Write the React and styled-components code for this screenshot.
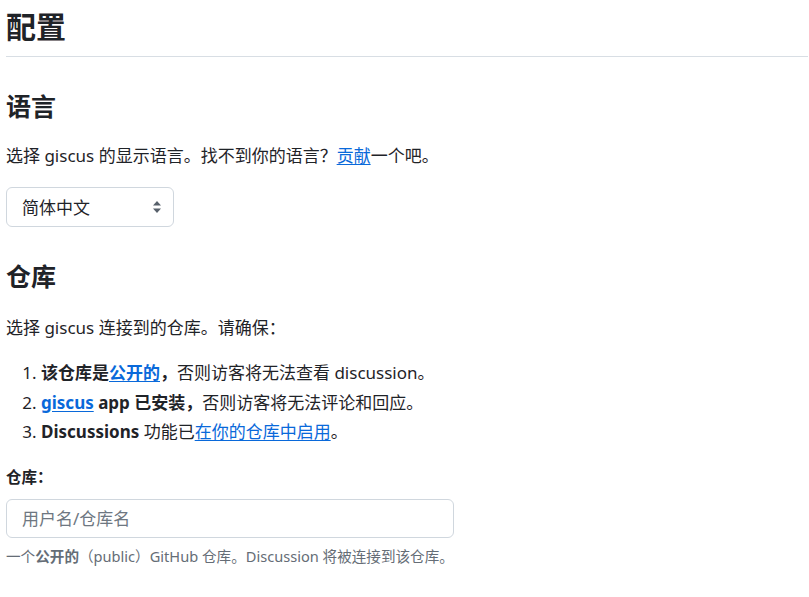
import React from 'react';
import styled, { createGlobalStyle } from 'styled-components';

const GlobalStyle = createGlobalStyle`
    body {
        margin: 0;
        background: #ffffff;
        color: #1f2328;
        font-family: "Noto Sans", "Noto Sans CJK SC", sans-serif;
        font-size: 17px;
        line-height: 1.5;
    }
`;

const Page = styled.div`
    padding: 8px 1px 0 6px;
`;

const Title = styled.h1`
    margin: 0;
    padding-bottom: 10px;
    font-size: 30px;
    font-weight: 700;
    line-height: 1.25;
    border-bottom: 1px solid #d8dee4;
`;

const SectionTitle = styled.h2`
    margin: ${(p) => p.$top}px 0 0;
    font-size: 25px;
    font-weight: 700;
    line-height: 1.25;
`;

const Text = styled.p`
    margin: ${(p) => p.$top}px 0 0;
`;

const Link = styled.a`
    color: #0969da;
    text-decoration: underline;
    text-underline-offset: 2px;
    font-weight: ${(p) => (p.$bold ? 700 : 400)};
`;

const SelectWrap = styled.div`
    position: relative;
    width: 168px;
    margin-top: 19px;
`;

const Select = styled.select`
    appearance: none;
    width: 100%;
    height: 40px;
    padding: 0 30px 0 15px;
    border: 1px solid #d0d7de;
    border-radius: 6px;
    background: #ffffff;
    color: #1f2328;
    font: inherit;
    font-size: 17px;
    box-sizing: border-box;
`;

const Arrow = styled.svg`
    position: absolute;
    right: 11px;
    top: 13px;
    pointer-events: none;
`;

const Steps = styled.ol`
    margin: 20px 0 0;
    padding-left: 35px;

    li + li {
        margin-top: 4px;
    }
`;

const Label = styled.label`
    display: block;
    margin-top: 21px;
    font-size: 15.5px;
    font-weight: 700;
`;

const Input = styled.input`
    display: block;
    width: 448px;
    height: 39px;
    margin-top: 10px;
    padding: 0 15px;
    border: 1px solid #d0d7de;
    border-radius: 6px;
    box-sizing: border-box;
    font: inherit;
    font-size: 17px;
    color: #1f2328;

    &::placeholder {
        color: #6e7781;
    }
`;

const Hint = styled.p`
    margin: 8px 0 0;
    font-size: 14.6px;
    color: #656d76;

    strong {
        font-weight: 700;
    }
`;

const App = () => {
    return (
        <Page>
            <GlobalStyle />
            <Title>配置</Title>

            <SectionTitle $top={34}>语言</SectionTitle>
            <Text $top={21}>
                选择 giscus 的显示语言。找不到你的语言？<Link href="#">贡献</Link>一个吧。
            </Text>
            <SelectWrap>
                <Select defaultValue="zh-CN">
                    <option value="zh-CN">简体中文</option>
                    <option value="en">English</option>
                </Select>
                <Arrow width="12" height="14" viewBox="0 0 12 14">
                    <path d="M6 1 L10 5.5 H2 Z" fill="#57606a" />
                    <path d="M6 13 L10 8.5 H2 Z" fill="#57606a" />
                </Arrow>
            </SelectWrap>

            <SectionTitle $top={34}>仓库</SectionTitle>
            <Text $top={22}>选择 giscus 连接到的仓库。请确保：</Text>
            <Steps>
                <li>
                    <strong>该仓库是<Link href="#" $bold>公开的</Link>，</strong>否则访客将无法查看 discussion。
                </li>
                <li>
                    <strong><Link href="#" $bold>giscus</Link> app 已安装，</strong>否则访客将无法评论和回应。
                </li>
                <li>
                    <strong>Discussions</strong> 功能已<Link href="#">在你的仓库中启用</Link>。
                </li>
            </Steps>

            <Label htmlFor="repo">仓库：</Label>
            <Input id="repo" type="text" placeholder="用户名/仓库名" />
            <Hint>
                一个<strong>公开的</strong>（public）GitHub 仓库。Discussion 将被连接到该仓库。
            </Hint>
        </Page>
    );
};

export default App;
